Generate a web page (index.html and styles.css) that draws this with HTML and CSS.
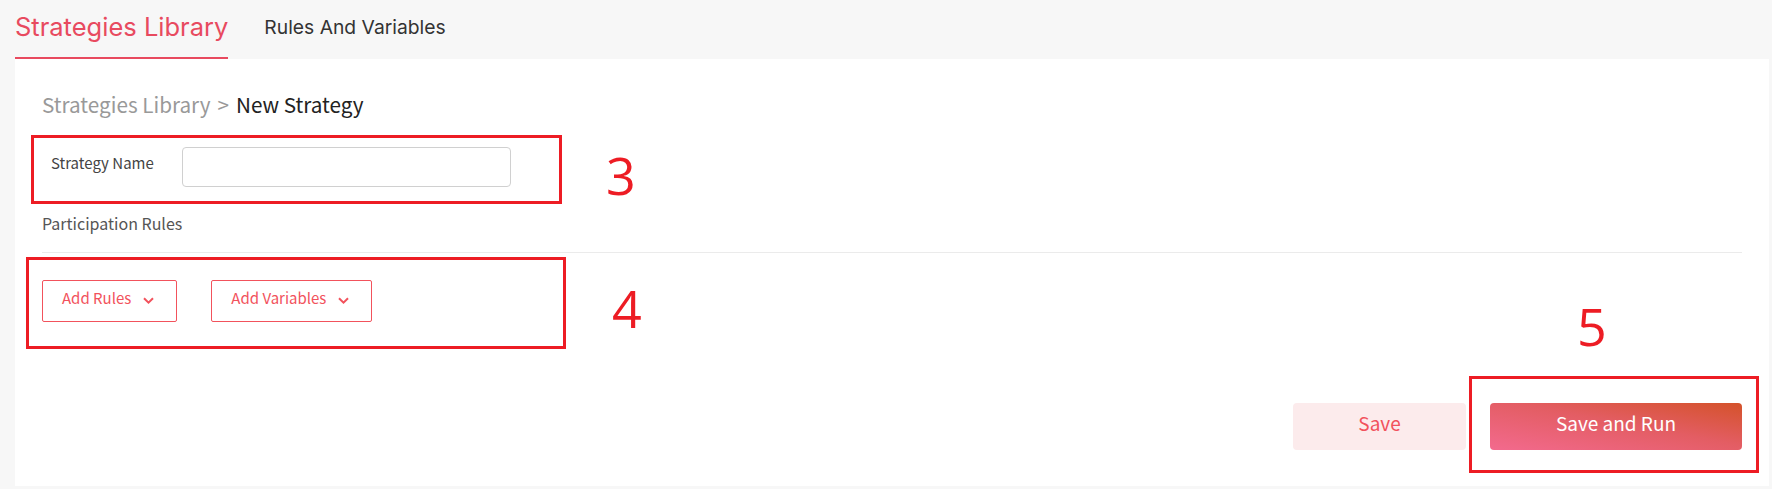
FILE: index.html
```html
<!DOCTYPE html>
<html lang="en">
<head>
<meta charset="utf-8">
<title>New Strategy</title>
<link rel="stylesheet" href="styles.css">
</head>
<body>
<div class="page">
  <header class="tabs">
    <a class="tab tab-active">Strategies Library</a>
    <a class="tab">Rules And Variables</a>
  </header>
  <main class="card">
    <nav class="crumbs"><span class="crumb-link">Strategies Library</span><span class="crumb-sep">&gt;</span><span class="crumb-current">New Strategy</span></nav>
    <div class="form-row">
      <label class="form-label">Strategy Name</label>
      <input class="form-input" type="text">
    </div>
    <div class="section-title">Participation Rules</div>
    <div class="divider"></div>
    <div class="add-row">
      <button class="btn-outline">Add Rules<svg class="chev" width="11" height="7" viewBox="0 0 11 7"><path d="M1 1.2 L5.5 5.6 L10 1.2" fill="none" stroke="currentColor" stroke-width="2"/></svg></button>
      <button class="btn-outline">Add Variables<svg class="chev" width="11" height="7" viewBox="0 0 11 7"><path d="M1 1.2 L5.5 5.6 L10 1.2" fill="none" stroke="currentColor" stroke-width="2"/></svg></button>
    </div>
    <div class="actions">
      <button class="btn-light">Save</button>
      <button class="btn-primary">Save and Run</button>
    </div>
  </main>

  <div class="anno-box box-3"></div>
  <div class="anno-box box-4"></div>
  <div class="anno-box box-5"></div>
  <div class="anno-num num-3">3</div>
  <div class="anno-num num-4">4</div>
  <div class="anno-num num-5">5</div>
</div>
</body>
</html>
```

FILE: styles.css
```css
* { box-sizing: border-box; }
html, body { margin: 0; padding: 0; }
body {
  background: #f7f7f7;
  font-family: "Noto Sans CJK SC", "Noto Sans", sans-serif;
  color: #333;
}
.page {
  position: relative;
  width: 1772px;
  height: 489px;
  padding: 0 3px 3px 15px;
  display: flex;
  flex-direction: column;
}
.tabs {
  display: flex;
  gap: 36px;
  height: 59px;
  flex: none;
}
.tab {
  font-family: Inter, Roboto, sans-serif;
  font-size: 19.3px;
  line-height: 54px;
  padding-bottom: 3px;
  color: #333;
  border-bottom: 2px solid transparent;
  height: 59px;
}
.tab-active {
  font-size: 25.5px;
  color: #e84a5f;
  border-bottom-color: #e84a5f;
}
.card {
  flex: 1;
  background: #fff;
  padding: 31px 27px 36px 27px;
  display: flex;
  flex-direction: column;
}
.crumbs {
  font-size: 20.7px;
  line-height: 28px;
  display: flex;
  gap: 7px;
}
.crumb-link { color: #999; }
.crumb-sep { color: #999; }
.crumb-current { color: #222; }
.form-row {
  margin-top: 29px;
  display: flex;
  align-items: flex-start;
  padding-left: 9px;
  height: 40px;
}
.form-label {
  width: 131px;
  font-size: 15px;
  line-height: 32px;
  color: #444;
}
.form-input {
  width: 329px;
  height: 40px;
  border: 1px solid #d0d0d0;
  border-radius: 4px;
  outline: none;
  background: #fff;
}
.section-title {
  margin-top: 24px;
  font-size: 16px;
  line-height: 24px;
  color: #555;
}
.divider {
  margin-top: 17px;
  height: 1px;
  background: #ebebeb;
}
.add-row {
  margin-top: 27px;
  display: flex;
  gap: 34px;
}
.btn-outline {
  display: flex;
  align-items: center;
  gap: 12px;
  height: 42px;
  padding: 0 22px 6px 19px;
  border: 1px solid #f2525c;
  border-radius: 2px;
  background: #fff;
  color: #f2525c;
  font-family: "Noto Sans CJK SC", "Noto Sans", sans-serif;
  font-size: 15px;
  line-height: 34px;
}
.chev { margin-top: 5px; }
.actions {
  margin-top: 81px;
  display: flex;
  justify-content: flex-end;
  gap: 24px;
}
.btn-light, .btn-primary {
  height: 47px;
  border: none;
  border-radius: 4px;
  font-family: "Noto Sans CJK SC", "Noto Sans", sans-serif;
  font-size: 19px;
  line-height: 40px;
  padding: 0 0 7px 0;
}
.btn-light {
  width: 173px;
  background: #fcebec;
  color: #f2525c;
}
.btn-primary {
  width: 252px;
  color: #fff;
  background: linear-gradient(to top right, #f36a8e, #e35d63 55%, #d4522a);
}
.anno-box {
  position: absolute;
  border: 3px solid #ed1c24;
}
.box-3 { left: 31px; top: 135px; width: 531px; height: 69px; }
.box-4 { left: 26px; top: 257px; width: 540px; height: 92px; }
.box-5 { left: 1469px; top: 376px; width: 290px; height: 97px; }
.anno-num {
  position: absolute;
  font-family: "Open Sans", sans-serif;
  font-size: 52px;
  line-height: 1;
  color: #ed1c24;
}
.num-3 { left: 606px; top: 149px; }
.num-4 { left: 612px; top: 282px; }
.num-5 { left: 1577px; top: 300px; }
```
